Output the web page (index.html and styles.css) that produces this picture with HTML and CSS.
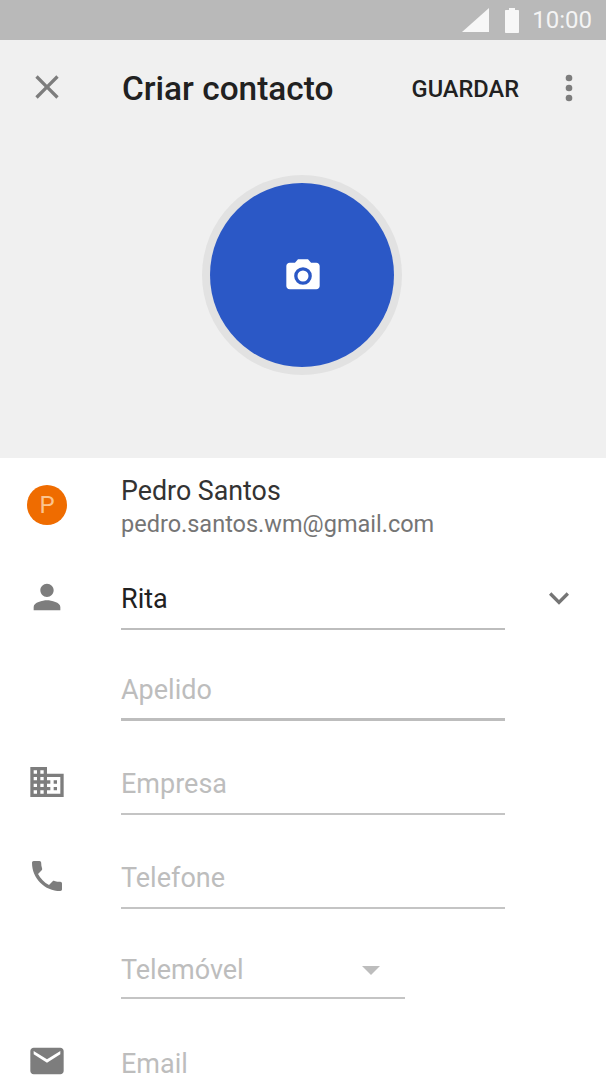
FILE: index.html
```html
<!DOCTYPE html>
<html lang="pt">
<head>
    <meta charset="UTF-8">
    <meta name="viewport" content="width=device-width, initial-scale=1.0">
    <title>Criar contacto</title>
    <link rel="stylesheet" href="styles.css">
</head>
<body>
    <div class="status-bar">
        <svg class="signal" width="27" height="24" viewBox="0 0 27 24"><path d="M27 0v24H0z"/></svg>
        <svg class="battery" width="14" height="25" viewBox="0 0 14 25"><path d="M4 0h6v2h3c.6 0 1 .4 1 1v21c0 .6-.4 1-1 1H1c-.6 0-1-.4-1-1V3c0-.6.4-1 1-1h3z"/></svg>
        <span class="clock">10:00</span>
    </div>

    <div class="hero">
        <div class="toolbar">
            <svg class="icon close" viewBox="0 0 24 24"><path d="M19 6.41 17.59 5 12 10.59 6.41 5 5 6.41 10.59 12 5 17.59 6.41 19 12 13.41 17.59 19 19 17.59 13.41 12z"/></svg>
            <h1 class="title">Criar contacto</h1>
            <span class="save">GUARDAR</span>
            <svg class="icon more" viewBox="0 0 24 24"><circle cx="12" cy="6" r="2"/><circle cx="12" cy="12" r="2"/><circle cx="12" cy="18" r="2"/></svg>
        </div>
        <div class="photo-ring">
            <div class="photo">
                <svg class="icon camera" viewBox="0 0 24 24">
                    <path d="M9 2 7.17 4H4c-1.1 0-2 .9-2 2v12c0 1.1.9 2 2 2h16c1.1 0 2-.9 2-2V6c0-1.1-.9-2-2-2h-3.17L15 2z"/>
                    <circle class="lens" cx="12" cy="12" r="4.3"/>
                </svg>
            </div>
        </div>
    </div>

    <form class="form">
        <div class="account">
            <div class="account-col"><span class="avatar">P</span></div>
            <div>
                <div class="account-name">Pedro Santos</div>
                <div class="account-mail">pedro.santos.wm@gmail.com</div>
            </div>
        </div>

        <div class="row">
            <div class="icon-col">
                <svg class="icon" viewBox="0 0 24 24"><path d="M12 12c2.21 0 4-1.79 4-4s-1.79-4-4-4-4 1.79-4 4 1.79 4 4 4zm0 2c-2.67 0-8 1.34-8 4v2h16v-2c0-2.66-5.33-4-8-4z"/></svg>
            </div>
            <div class="field field-name"><span class="value">Rita</span></div>
            <svg class="icon expand" viewBox="0 0 24 24"><path d="M16.59 8.59 12 13.17 7.41 8.59 6 10l6 6 6-6z"/></svg>
        </div>

        <div class="row">
            <div class="icon-col"></div>
            <div class="field field-active"><span class="hint">Apelido</span></div>
        </div>

        <div class="row">
            <div class="icon-col">
                <svg class="icon" viewBox="0 0 24 24"><path d="M12 7V3H2v18h20V7H12zM6 19H4v-2h2v2zm0-4H4v-2h2v2zm0-4H4V9h2v2zm0-4H4V5h2v2zm4 12H8v-2h2v2zm0-4H8v-2h2v2zm0-4H8V9h2v2zm0-4H8V5h2v2zm10 12h-8v-2h2v-2h-2v-2h2v-2h-2V9h8v10zm-2-8h-2v2h2v-2zm0 4h-2v2h2v-2z"/></svg>
            </div>
            <div class="field"><span class="hint">Empresa</span></div>
        </div>

        <div class="row">
            <div class="icon-col">
                <svg class="icon" viewBox="0 0 24 24"><path d="M6.62 10.79c1.44 2.83 3.76 5.14 6.59 6.59l2.2-2.2c.27-.27.67-.36 1.02-.24 1.12.37 2.33.57 3.57.57.55 0 1 .45 1 1V20c0 .55-.45 1-1 1-9.39 0-17-7.61-17-17 0-.55.45-1 1-1h3.5c.55 0 1 .45 1 1 0 1.25.2 2.45.57 3.57.11.35.03.74-.25 1.02l-2.2 2.2z"/></svg>
            </div>
            <div class="field"><span class="hint">Telefone</span></div>
        </div>

        <div class="row">
            <div class="icon-col"></div>
            <div class="field field-type">
                <span class="hint">Telemóvel</span>
                <span class="caret"></span>
            </div>
        </div>

        <div class="row">
            <div class="icon-col icon-col-open">
                <svg class="icon" viewBox="0 0 24 24"><path d="M20 4H4c-1.1 0-2 .9-2 2v12c0 1.1.9 2 2 2h16c1.1 0 2-.9 2-2V6c0-1.1-.9-2-2-2zm0 4-8 5-8-5V6l8 5 8-5v2z"/></svg>
            </div>
            <div class="field field-open"><span class="hint">Email</span></div>
        </div>
    </form>
</body>
</html>
```

FILE: styles.css
```css
html, body {
    margin: 0;
    height: 1078px;
    overflow: hidden;
}

body {
    font-family: Roboto, "Noto Sans", sans-serif;
    background-color: #fff;
    color: #212121;
}

.status-bar {
    height: 40px;
    background-color: #b9b9b9;
    display: flex;
    align-items: center;
    padding-right: 14px;
    justify-content: flex-end;
}

.signal, .battery {
    fill: #f7f7f7;
}

.signal {
    margin-right: 16px;
}

.battery {
    margin-right: 13px;
}

.clock {
    color: #f4f4f4;
    font-size: 24px;
}

.icon {
    width: 40px;
    height: 40px;
    fill: #7d7d7d;
    display: block;
    flex: none;
}

.hero {
    height: 418px;
    background-color: #f0f0f0;
}

.toolbar {
    height: 95px;
    display: flex;
    align-items: center;
    padding: 0 17px 0 27px;
}

.title {
    margin: 2px 0 0 55px;
    font-size: 33.4px;
    font-weight: 500;
    flex: 1;
}

.save {
    font-size: 23.6px;
    font-weight: 500;
    margin: 2px 30px 0 0;
}

.close {
    margin-top: -1px;
}

.photo-ring {
    width: 200px;
    height: 200px;
    margin: 40px 0 0 202px;
    border-radius: 50%;
    background-color: #e2e2e2;
    display: flex;
    align-items: center;
    justify-content: center;
}

.photo {
    width: 184px;
    height: 184px;
    border-radius: 50%;
    background-color: #2b58c6;
    display: flex;
    align-items: center;
    justify-content: center;
}

.camera {
    fill: #fff;
    margin: 2px 0 0 2px;
}

.lens {
    fill: #fff;
    stroke: #2b58c6;
    stroke-width: 2;
}

.account {
    height: 107px;
    display: flex;
    padding-top: 15px;
    box-sizing: border-box;
}

.account-col {
    width: 121px;
    padding: 12px 0 0 27px;
    box-sizing: border-box;
}

.avatar {
    width: 40px;
    height: 40px;
    border-radius: 50%;
    background-color: #ef6c00;
    color: #fbc48f;
    font-size: 24px;
    display: flex;
    align-items: center;
    justify-content: center;
}

.account-name {
    font-size: 26.8px;
    line-height: 36px;
    color: #333;
}

.account-mail {
    font-size: 23.5px;
    line-height: 31px;
    color: #757575;
}

.row {
    display: flex;
}

.icon-col {
    width: 121px;
    padding: 0 0 13px 27px;
    box-sizing: border-box;
    flex: none;
    align-self: flex-end;
}

.icon-col-open {
    padding-bottom: 12px;
}

.field {
    width: 384px;
    height: 94px;
    box-sizing: border-box;
    border-bottom: 2px solid #c4c4c4;
    display: flex;
    align-items: flex-end;
    padding: 0 0 12px;
    font-size: 27px;
    line-height: 34px;
}

.field-name {
    height: 65px;
    border-bottom-color: #bdbdbd;
}

.field-active {
    height: 91px;
    border-bottom: 3px solid #bdbdbd;
    padding-bottom: 11px;
}

.field-type {
    width: 284px;
    height: 90px;
    padding-bottom: 10px;
    justify-content: space-between;
}

.field-open {
    padding-bottom: 10px;
    border-bottom-color: transparent;
}

.value {
    color: #212121;
}

.hint {
    color: #bdbdbd;
}

.expand {
    margin: 13px 0 0 34px;
    fill: #757575;
}

.caret {
    width: 0;
    height: 0;
    border-left: 9px solid transparent;
    border-right: 9px solid transparent;
    border-top: 9px solid #bdbdbd;
    margin: 0 25px 12px 0;
}
```
